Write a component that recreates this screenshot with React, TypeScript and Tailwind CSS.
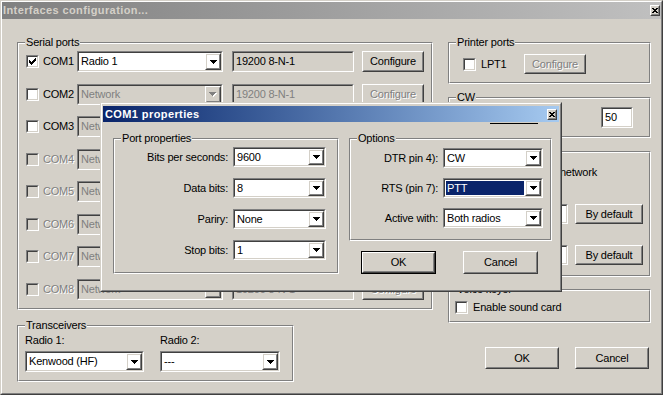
import React from "react";

const DIS = "text-[#808080] [text-shadow:1px_1px_0_#ffffff]";

const ARROW = ["XXXXXXX", ".XXXXX.", "..XXX..", "...X..."];
const CHECK = ["......X", ".....XX", "X...XXX", "XX.XXX.", "XXXXX..", ".XXX...", "..X...."];
const CLOSE = ["XX..XX", ".XXXX.", "..XX..", ".XXXX.", "XX..XX"];

function Pixels({ rows, color, shadow }: { rows: string[]; color: string; shadow?: string }) {
  const w = rows[0].length;
  const h = rows.length;
  const pts: [number, number][] = [];
  rows.forEach((r, y) => r.split("").forEach((c, x) => { if (c === "X") pts.push([x, y]); }));
  return (
    <svg width={shadow ? w + 1 : w} height={shadow ? h + 1 : h} shapeRendering="crispEdges" className="block">
      {shadow && pts.map(([x, y]) => <rect key={"s" + x + "-" + y} x={x + 1} y={y + 1} width={1} height={1} fill={shadow} />)}
      {pts.map(([x, y]) => <rect key={x + "-" + y} x={x} y={y} width={1} height={1} fill={color} />)}
    </svg>
  );
}

function Sunken({ className = "", inner = "", children }: { className?: string; inner?: string; children?: React.ReactNode }) {
  return (
    <div className={`border border-t-[#808080] border-l-[#808080] border-b-white border-r-white ${className}`}>
      <div className={`h-full w-full border border-t-[#404040] border-l-[#404040] border-b-[#d4d0c8] border-r-[#d4d0c8] ${inner}`}>{children}</div>
    </div>
  );
}

function Raised({ className = "", inner = "", children }: { className?: string; inner?: string; children?: React.ReactNode }) {
  return (
    <div className={`border border-t-white border-l-white border-b-[#404040] border-r-[#404040] ${className}`}>
      <div className={`h-full w-full border border-t-[#d4d0c8] border-l-[#d4d0c8] border-b-[#808080] border-r-[#808080] flex items-center justify-center ${inner}`}>{children}</div>
    </div>
  );
}

function Button({ label, w, h, disabled, def }: { label: string; w: string; h: string; disabled?: boolean; def?: boolean }) {
  if (def) {
    return (
      <div className={`${w} ${h} border border-black shrink-0`}>
        <Raised className="w-full h-full"><span>{label}</span></Raised>
      </div>
    );
  }
  return (
    <Raised className={`${w} ${h} shrink-0`}>
      <span className={disabled ? DIS : ""}>{label}</span>
    </Raised>
  );
}

function Combo({ w, h, value, disabled, selected }: { w: string; h: string; value: string; disabled?: boolean; selected?: boolean }) {
  return (
    <Sunken className={`${w} ${h} shrink-0`} inner={`flex ${disabled ? "bg-[#d4d0c8]" : "bg-white"}`}>
      <div className="flex-1 min-w-0 flex p-[1px]">
        <div className={`flex-1 flex items-center pl-[1px] whitespace-nowrap overflow-hidden ${selected ? "bg-[#0a246a] text-white" : disabled ? "text-[#808080]" : "text-black"}`}>{value}</div>
      </div>
      <Raised className="w-[16px] h-full shrink-0">
        <Pixels rows={ARROW} color={disabled ? "#808080" : "#000000"} shadow={disabled ? "#ffffff" : undefined} />
      </Raised>
    </Sunken>
  );
}

function Field({ className, value, white, disabled }: { className: string; value: string; white?: boolean; disabled?: boolean }) {
  return (
    <Sunken className={`shrink-0 ${className}`} inner={`flex items-center pl-[2px] whitespace-nowrap overflow-hidden ${white ? "bg-white" : "bg-[#d4d0c8]"} ${disabled ? "text-[#808080]" : "text-black"}`}>
      {value}
    </Sunken>
  );
}

function Check({ checked, disabled }: { checked?: boolean; disabled?: boolean }) {
  return (
    <Sunken className="w-[13px] h-[13px] shrink-0" inner={`flex items-center justify-center ${disabled ? "bg-[#d4d0c8]" : "bg-white"}`}>
      {checked && <Pixels rows={CHECK} color="#000000" />}
    </Sunken>
  );
}

function Group({ label, className = "", inner = "", children }: { label?: string; className?: string; inner?: string; children?: React.ReactNode }) {
  return (
    <div className={`relative shrink-0 border border-t-[#808080] border-l-[#808080] border-b-white border-r-white ${className}`}>
      <div className={`h-full w-full border border-t-white border-l-white border-b-[#808080] border-r-[#808080] ${inner}`}>{children}</div>
      {label && <span className="absolute -top-[7px] left-[7px] px-[1px] bg-[#d4d0c8] leading-[13px] whitespace-nowrap">{label}</span>}
    </div>
  );
}

function CloseBtn() {
  return (
    <Raised className="w-[10px] h-[11px] shrink-0 bg-[#d4d0c8]">
      <Pixels rows={CLOSE} color="#000000" />
    </Raised>
  );
}

const COMS = [1, 2, 3, 4, 5, 6, 7, 8];

export default function App() {
  return (
    <div className="w-[663px] h-[395px] overflow-hidden font-['Liberation_Sans',Arial,sans-serif] text-[11px] leading-[13px] tracking-[-0.2px] text-black">
      <div className="relative w-full h-full bg-[#d4d0c8] border border-t-[#d4d0c8] border-l-[#d4d0c8] border-b-[#404040] border-r-[#404040]">
        <div className="w-full h-full border border-t-white border-l-white border-b-[#808080] border-r-[#808080] flex flex-col">
          {/* Title bar (inactive) */}
          <div className="h-[17px] shrink-0 flex items-center bg-linear-to-r from-[#808080] to-[#c0c0c0] pl-[1px] pr-[1px]">
            <span className="flex-1 font-bold tracking-[0.4px] text-[#d4d0c8] whitespace-nowrap">Interfaces configuration...</span>
            <CloseBtn />
          </div>

          {/* Body */}
          <div className="flex gap-[15px] pl-[15px] pt-[23px]">
            {/* Left column */}
            <div className="flex flex-col w-[416px]">
              <Group label="Serial ports" className="w-[416px] h-[268px]" inner="flex flex-col gap-[11.5px] pt-[7px] pl-[7px]">
                {COMS.map((n) => {
                  const i = n - 1;
                  const covered = i >= 2 && i <= 6;
                  return (
                    <div key={n} className="flex items-center h-[21px] shrink-0">
                      <div className="w-[51px] flex items-center shrink-0">
                        <Check checked={i === 0} disabled={i >= 3} />
                        <span className={`ml-[4px] ${i >= 3 ? DIS : ""}`}>COM{n}</span>
                      </div>
                      <Combo w="w-[146px]" h="h-[21px]" value={i === 0 ? "Radio 1" : "Network"} disabled={i > 0} />
                      <Field className="ml-[9px] w-[122px] h-[21px]" value={covered ? "" : "19200 8-N-1"} disabled={i > 0} />
                      <div className="ml-[8px]">
                        <Button label={covered ? "" : "Configure"} w="w-[62px]" h="h-[21px]" disabled={i > 0} />
                      </div>
                    </div>
                  );
                })}
              </Group>

              <Group label="Transceivers" className="mt-[15px] w-[277px] h-[57px]" inner="flex gap-[16px] pt-[7px] pl-[6px]">
                <div className="flex flex-col w-[119px]">
                  <span className="h-[13px]">Radio 1:</span>
                  <div className="mt-[4px]">
                    <Combo w="w-[119px]" h="h-[21px]" value="Kenwood (HF)" />
                  </div>
                </div>
                <div className="flex flex-col w-[120px]">
                  <span className="h-[13px]">Radio 2:</span>
                  <div className="mt-[4px]">
                    <Combo w="w-[120px]" h="h-[21px]" value="---" />
                  </div>
                </div>
              </Group>
            </div>

            {/* Right column */}
            <div className="flex flex-col w-[203px]">
              <Group label="Printer ports" className="w-[203px] h-[42px]" inner="flex items-start pl-[13px] pt-[10px]">
                <div className="flex items-center h-[20px]">
                  <Check />
                  <span className="ml-[5px] w-[43px]">LPT1</span>
                  <Button label="Configure" w="w-[62px]" h="h-[20px]" disabled />
                </div>
              </Group>

              <Group label="CW" className="mt-[13px] w-[203px] h-[41px]" inner="flex justify-end items-start pt-[8px] pr-[16px]">
                <Field className="w-[32px] h-[21px]" value="50" white />
              </Group>

              <Group className="mt-[13px] w-[203px] h-[126px]" inner="flex flex-col pt-[13px] pr-[6px]">
                <div className="h-[13px] text-right pr-[46px] whitespace-nowrap">network</div>
                <div className="mt-[25px] flex justify-end items-center gap-[7px] h-[20px]">
                  <Field className="w-[110px] h-[20px]" value="" white />
                  <Button label="By default" w="w-[68px]" h="h-[20px]" />
                </div>
                <div className="mt-[21px] flex justify-end items-center gap-[7px] h-[20px]">
                  <Field className="w-[110px] h-[20px]" value="" white />
                  <Button label="By default" w="w-[68px]" h="h-[20px]" />
                </div>
              </Group>

              <Group label="Voice keyer" className="mt-[12px] w-[203px] h-[34px]" inner="flex items-start pl-[5px] pt-[10px]">
                <div className="flex items-center h-[13px]">
                  <Check />
                  <span className="ml-[5px]">Enable sound card</span>
                </div>
              </Group>

              <div className="mt-[24px] flex gap-[16px] pl-[37px]">
                <Button label="OK" w="w-[74px]" h="h-[22px]" />
                <Button label="Cancel" w="w-[74px]" h="h-[22px]" />
              </div>
            </div>
          </div>
        </div>

        {/* COM1 properties dialog */}
        <div className="absolute left-[99px] top-[101px] w-[462px] h-[190px] bg-[#d4d0c8] border border-t-[#d4d0c8] border-l-[#d4d0c8] border-b-[#404040] border-r-[#404040]">
          <div className="relative w-full h-full border border-t-white border-l-white border-b-[#808080] border-r-[#808080] pt-[2px] px-[1px]">
            <div className="h-[16px] flex items-center bg-linear-to-r from-[#0a246a] to-[#a6caf0] pl-[2px] pr-[2px]">
              <span className="flex-1 font-bold tracking-[0.4px] text-white whitespace-nowrap">COM1 properties</span>
              <CloseBtn />
            </div>
            <div className="absolute left-[388px] top-[19px] w-[48px] h-[1px] bg-black" />

            <div className="flex gap-[10px] pl-[10px] pt-[16px]">
              <Group label="Port properties" className="w-[226px] h-[136px]" inner="flex flex-col gap-[11px] pt-[7px] pr-[11px]">
                {[
                  ["Bits per seconds:", "9600"],
                  ["Data bits:", "8"],
                  ["Pariry:", "None"],
                  ["Stop bits:", "1"],
                ].map(([l, v]) => (
                  <div key={l} className="flex items-center h-[20px] shrink-0">
                    <span className="flex-1 text-right pr-[5px] whitespace-nowrap">{l}</span>
                    <Combo w="w-[93px]" h="h-[20px]" value={v} />
                  </div>
                ))}
              </Group>

              <div className="flex flex-col">
                <Group label="Options" className="w-[203px] h-[103px]" inner="flex flex-col gap-[10px] pt-[8px] pr-[7px]">
                  {[
                    ["DTR pin 4):", "CW", false],
                    ["RTS (pin 7):", "PTT", true],
                    ["Active with:", "Both radios", false],
                  ].map(([l, v, s]) => (
                    <div key={l as string} className="flex items-center h-[20px] shrink-0">
                      <span className="flex-1 text-right pr-[5px] whitespace-nowrap">{l as string}</span>
                      <Combo w="w-[100px]" h="h-[20px]" value={v as string} selected={s as boolean} />
                    </div>
                  ))}
                </Group>
                <div className="flex mt-[10px] pl-[12px] gap-[27px]">
                  <Button def label="OK" w="w-[75px]" h="h-[23px]" />
                  <Button label="Cancel" w="w-[75px]" h="h-[23px]" />
                </div>
              </div>
            </div>
          </div>
        </div>
      </div>
    </div>
  );
}
